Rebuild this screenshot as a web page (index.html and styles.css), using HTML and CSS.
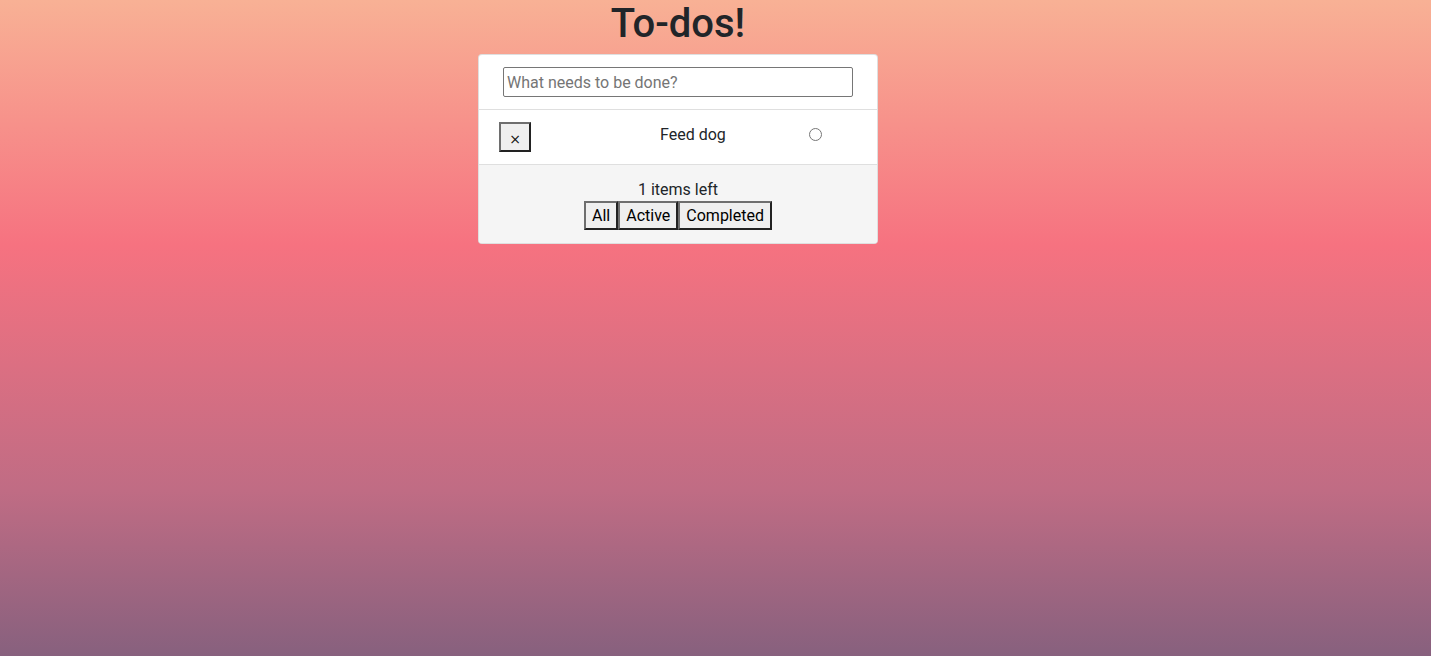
FILE: index.html
```html
<!DOCTYPE html>
<html lang="en">
<head>
<meta charset="utf-8">
<title>To-dos!</title>
<link rel="stylesheet" href="styles.css">
</head>
<body>
  <div class="app">
    <h1 class="title">To-dos!</h1>
    <div class="card">
      <div class="new-todo">
        <input class="new-input" type="text" placeholder="What needs to be done?">
      </div>
      <div class="todo-row">
        <button class="remove-btn">×</button>
        <span class="todo-text">Feed dog</span>
        <input class="todo-check" type="radio">
      </div>
      <div class="card-footer">
        <div class="count">1 items left</div>
        <div class="filters">
          <button class="filter-btn">All</button><button class="filter-btn">Active</button><button class="filter-btn">Completed</button>
        </div>
      </div>
    </div>
  </div>
</body>
</html>
```

FILE: styles.css
```css
html, body {
  margin: 0;
  padding: 0;
  height: 100%;
}

body {
  font-family: "Roboto", "Helvetica Neue", Arial, sans-serif;
  color: #212529;
  background: linear-gradient(180deg, #f8b195 0px, #f67280 245px, #c06c84 490px, #6c5b7b 735px);
  background-repeat: no-repeat;
  min-height: 656px;
}

.app {
  width: 1356px;
  display: flex;
  flex-direction: column;
  align-items: center;
}

.title {
  margin: 0 0 6px 0;
  font-size: 40px;
  font-weight: 500;
  line-height: 48px;
}

.card {
  width: 398px;
  background: #fff;
  border: 1px solid rgba(0, 0, 0, 0.125);
  border-radius: 4px;
  overflow: hidden;
}

.new-todo {
  padding: 12px;
  display: flex;
  justify-content: center;
  border-bottom: 1px solid #dfdfdf;
}

.new-input {
  box-sizing: border-box;
  width: 350px;
  height: 30px;
  border: 1px solid #767676;
  border-radius: 2px;
  padding: 1px 3px;
  font-family: inherit;
  font-size: 16px;
  color: #212529;
  outline: none;
}

.new-input::placeholder {
  color: #757575;
}

.todo-row {
  display: flex;
  align-items: center;
  padding: 12px 20px;
  border-bottom: 1px solid #dfdfdf;
  height: 30px;
}

.remove-btn {
  box-sizing: border-box;
  width: 32px;
  height: 30px;
  padding: 4px 0 0 0;
  background: #efefef;
  border: 2px solid;
  border-color: #6e6e6e #222 #222 #6e6e6e;
  font-size: 14px;
  color: #111;
  font-family: "DejaVu Sans", sans-serif;
  line-height: 1;
}

.todo-text {
  margin: 0 0 4px 129px;
  font-size: 16px;
  line-height: 24px;
}

.todo-check {
  margin: 0 0 6px 83px;
  width: 13px;
  height: 13px;
}

.card-footer {
  background: #f5f5f5;
  padding: 13px 12px 13px;
  display: flex;
  flex-direction: column;
  align-items: center;
}

.count {
  font-size: 16px;
  line-height: 23px;
}

.filters {
  display: flex;
}

.filter-btn {
  box-sizing: border-box;
  height: 29px;
  padding: 0 6px;
  background: #efefef;
  border: 2px solid;
  border-color: #6e6e6e #222 #222 #6e6e6e;
  font-family: inherit;
  font-size: 16px;
  color: #000;
  line-height: 22px;
}
```
